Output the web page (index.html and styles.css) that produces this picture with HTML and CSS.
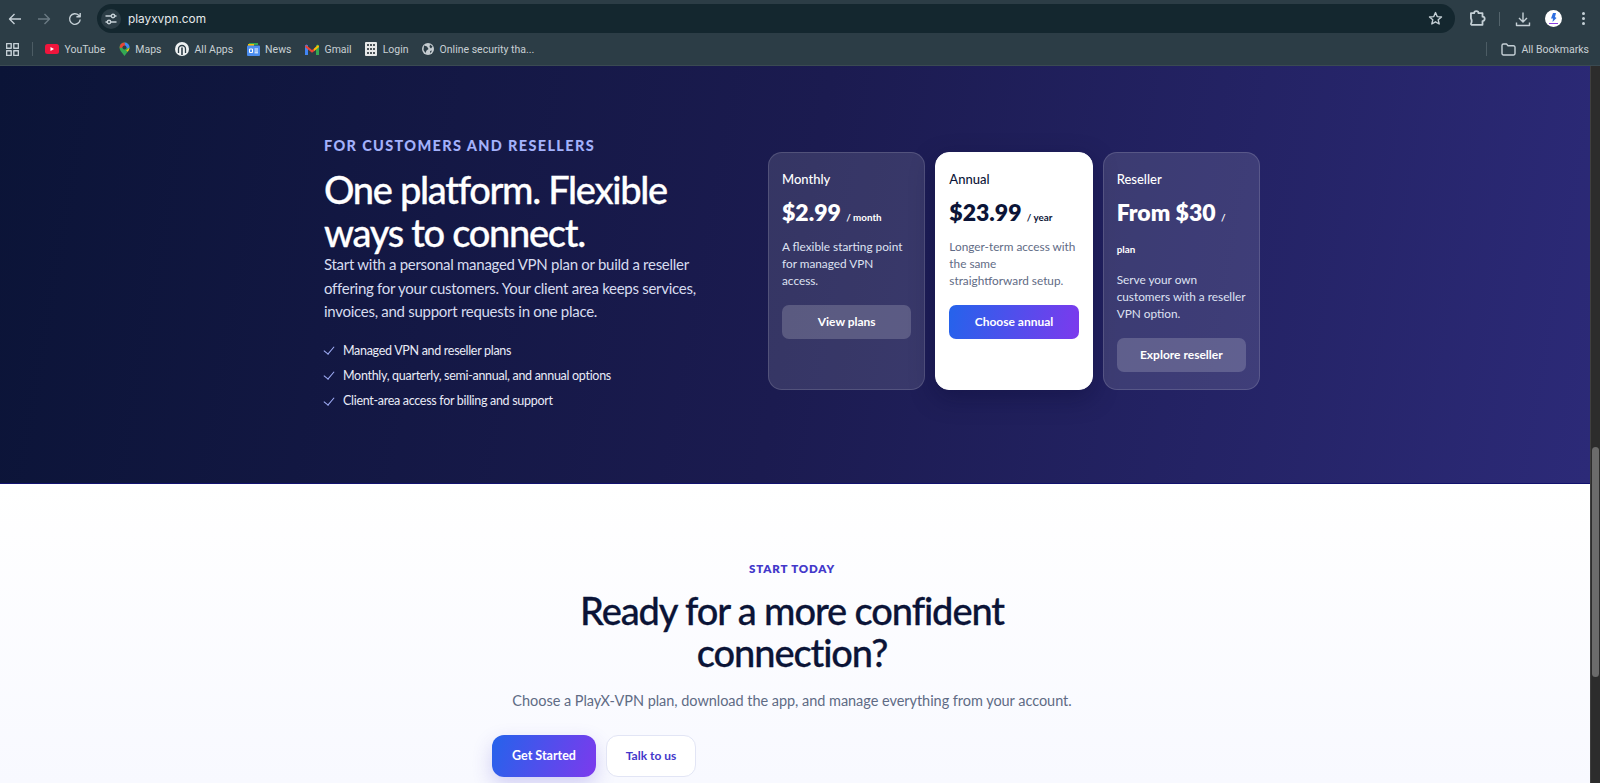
FILE: index.html
```html
<!DOCTYPE html>
<html lang="en">
<head>
<meta charset="UTF-8">
<meta name="viewport" content="width=device-width, initial-scale=1.0">
<title>PlayX-VPN</title>
<link rel="stylesheet" href="styles.css">
</head>
<body>
  <header class="browser">
    <div class="toolbar">
      <svg class="nav-icon" width="16" height="16" viewBox="0 0 16 16"><path d="M14 8H2.5M7.5 3 2.5 8l5 5"/></svg>
      <svg class="nav-icon dim" width="16" height="16" viewBox="0 0 16 16"><path d="M2 8h11.5M8.5 3l5 5-5 5"/></svg>
      <svg class="nav-icon" width="16" height="16" viewBox="0 0 16 16"><path d="M13.2 8.5a5.3 5.3 0 1 1-1.5-4.2l1.5 1.5M13.2 2v3.8H9.4"/></svg>
      <div class="omnibox">
        <span class="tune">
          <svg class="nav-icon" width="12" height="12" viewBox="0 0 12 12"><path d="M0.5 3h5.5M9.8 3h1.7M0.5 9h1.7M6 9h5.5"/><circle cx="8" cy="3" r="1.7"/><circle cx="4" cy="9" r="1.7"/></svg>
        </span>
        <span class="url">playxvpn.com</span>
        <svg class="nav-icon star" width="15" height="15" viewBox="0 0 15 15"><path d="M7.5 1.6 9.2 5.6l4.3.4-3.3 2.8 1 4.2-3.7-2.2-3.7 2.2 1-4.2L1.5 6l4.3-.4z"/></svg>
      </div>
      <svg class="nav-icon puzzle" width="18" height="18" viewBox="2 2 14 14"><path d="M3.5 4.5H6a1.7 1.7 0 0 1 3.4 0h3.1v2.7a1.7 1.7 0 0 1 0 3.4v2.9H4a.7.7 0 0 1-.5-.8c.8-1 .8-3.2 0-4.2z"/></svg>
      <span class="tool-sep"></span>
      <svg class="nav-icon download" width="16" height="16" viewBox="0 0 16 16"><path d="M8 1.5v9M4 7l4 4 4-4M1.5 11.5v3h13v-3"/></svg>
      <span class="avatar">
        <svg width="17" height="17" viewBox="0 0 17 17"><path d="M8 3h3l-1 4 1.5 1-4 4 .5-3.5H6z" fill="#2f6fe0"/><path d="M4 13.5h9" stroke="#8a3fe0" stroke-width="1"/></svg>
      </span>
      <span class="dots"><i></i><i></i><i></i></span>
    </div>
    <nav class="bookmarks">
      <svg class="nav-icon grid-icon" width="13" height="13" viewBox="0 0 13 13"><rect x=".6" y=".6" width="4.6" height="4.6"/><rect x="7.8" y=".6" width="4.6" height="4.6"/><rect x=".6" y="7.8" width="4.6" height="4.6"/><rect x="7.8" y="7.8" width="4.6" height="4.6"/></svg>
      <span class="book-sep"></span>
      <a class="mark">
        <svg width="14" height="10" viewBox="0 0 14 10"><rect width="14" height="10" rx="2.5" fill="#f0153c"/><path d="M5.5 3v4L9 5z" fill="#fff"/></svg>
        YouTube
      </a>
      <a class="mark">
        <svg width="11" height="14" viewBox="0 0 11 14"><path d="M5.5 14C3 10.5.5 8.5.5 5.5a5 5 0 0 1 10 0c0 3-2.5 5-5 8.5z" fill="#34a853"/><path d="M1.5 2.5a5 5 0 0 1 4-2l1 2.5L2.5 6l-2-.5z" fill="#ea4335"/><path d="M5.5.5a5 5 0 0 1 5 5L8 6.5 6 3z" fill="#4285f4"/><path d="M8 8l2.5-2.5c0 1.5-.8 2.8-1.8 4.2L7 8z" fill="#fbbc04"/><circle cx="5.5" cy="5.5" r="2" fill="#2c3d46"/></svg>
        Maps
      </a>
      <a class="mark">
        <svg width="14" height="14" viewBox="0 0 14 14"><circle cx="7" cy="7" r="7" fill="#eef1f2"/><path d="M3.5 11V7a3.5 3.5 0 0 1 7 0v4" fill="none" stroke="#2c3d46" stroke-width="1.3"/><path d="M7 5.5V13" stroke="#2c3d46" stroke-width="1.6"/></svg>
        All Apps
      </a>
      <a class="mark">
        <svg width="13" height="14" viewBox="0 0 13 14"><path d="M2 3V1h9v2z" fill="#34a853"/><path d="M1 4V2h6v2z" fill="#fbbc04"/><rect y="3.5" width="13" height="10.5" rx="1" fill="#4b8df0"/><path d="M2.5 7h3v3.5h-3zM7.5 7H11M7.5 9H11M7.5 10.8H11" fill="none" stroke="#fff"/></svg>
        News
      </a>
      <a class="mark">
        <svg width="14" height="11" viewBox="0 0 14 11"><path d="M0 11V1.5L1.5.5 3 1.5V11z" fill="#4285f4"/><path d="M11 11V1.5l1.5-1 1.5 1V11z" fill="#34a853"/><path d="M1 1l6 5 2-1.5v2.8L7 8.8 0 3z" fill="#ea4335"/><path d="M9 4.5 13 1l1 1.5V3L9 7.3z" fill="#fbbc04"/></svg>
        Gmail
      </a>
      <a class="mark">
        <svg width="12" height="14" viewBox="0 0 12 14"><rect width="12" height="14" rx="1" fill="#e6e8e8"/><path d="M2 2h2v2H2zM5 2h2v2H5zM8 2h2v2H8zM2 6h2v2H2zM5 6h2v2H5zM8 6h2v2H8zM5 10h2v2H5zM2 10h2v2H2zM8 10h2v2H8z" fill="#4a5257"/></svg>
        Login
      </a>
      <a class="mark">
        <svg width="12" height="12" viewBox="0 0 12 12"><circle cx="6" cy="6" r="6" fill="#c5ccd0"/><path d="M2 2.5l3 1L6.5 6l-2 1.5-1 2.5-2-3zM8 1.5l2.5 2L9 5.5 7.5 4zM8 8l2-.5-1.5 3z" fill="#2c3d46"/></svg>
        Online security tha...
      </a>
      <span class="book-sep end"></span>
      <a class="mark">
        <svg class="nav-icon" width="15" height="13" viewBox="0 0 15 13"><path d="M1 2.5A1.5 1.5 0 0 1 2.5 1h3L7 2.8h5.5A1.5 1.5 0 0 1 14 4.3v6.2a1.5 1.5 0 0 1-1.5 1.5h-10A1.5 1.5 0 0 1 1 10.5z"/></svg>
        All Bookmarks
      </a>
    </nav>
  </header>

  <div class="viewport">
    <main class="page">
      <section class="plans">
        <div class="plans-inner">
          <div class="intro">
            <p class="eyebrow">For customers and resellers</p>
            <h1>One platform. Flexible ways to connect.</h1>
            <p class="lead">Start with a personal managed VPN plan or build a reseller offering for your customers. Your client area keeps services, invoices, and support requests in one place.</p>
            <ul class="checks">
              <li>Managed VPN and reseller plans</li>
              <li>Monthly, quarterly, semi-annual, and annual options</li>
              <li>Client-area access for billing and support</li>
            </ul>
          </div>
          <div class="cards">
            <article class="card">
              <h3>Monthly</h3>
              <p class="price">$2.99 <small>/ month</small></p>
              <p class="desc">A flexible starting point for managed VPN access.</p>
              <a class="card-btn">View plans</a>
            </article>
            <article class="card featured">
              <h3>Annual</h3>
              <p class="price">$23.99 <small>/ year</small></p>
              <p class="desc">Longer-term access with the same straightforward setup.</p>
              <a class="card-btn">Choose annual</a>
            </article>
            <article class="card">
              <h3>Reseller</h3>
              <p class="price">From $30 <small>/</small> <small class="unit">plan</small></p>
              <p class="desc">Serve your own customers with a reseller VPN option.</p>
              <a class="card-btn">Explore reseller</a>
            </article>
          </div>
        </div>
      </section>

      <section class="cta">
        <div class="cta-inner">
          <p class="cta-eyebrow">Start today</p>
          <h2>Ready for a more confident connection?</h2>
          <p class="cta-text">Choose a PlayX-VPN plan, download the app, and manage everything from your account.</p>
          <div class="cta-actions">
            <a class="btn-primary">Get Started</a>
            <a class="btn-outline">Talk to us</a>
          </div>
        </div>
      </section>
    </main>
    <div class="scrollbar"><span class="thumb"></span></div>
  </div>
</body>
</html>
```

FILE: styles.css
```css
* {
  box-sizing: border-box;
}

html, body {
  height: 100%;
}

body {
  margin: 0;
  display: flex;
  flex-direction: column;
  overflow: hidden;
  font-family: Lato, "Open Sans", sans-serif;
  background-color: #fff;
}

p, h1, h2, h3, ul {
  margin: 0;
  padding: 0;
}

/* browser chrome */
.browser {
  height: 66px;
  flex: none;
  background-color: #2c3d46;
  border-bottom: 1px solid #3a4a52;
  font-family: Inter, "Liberation Sans", sans-serif;
}

.nav-icon {
  fill: none;
  stroke: #c5d0d6;
  stroke-width: 1.4;
  stroke-linejoin: round;
  flex: none;
}

.nav-icon.dim {
  stroke: #6a7a83;
}

.toolbar {
  height: 33px;
  display: flex;
  align-items: center;
  padding: 4px 0 0 7px;
}

.toolbar > .nav-icon:nth-child(2) {
  margin-left: 13px;
}

.toolbar > .nav-icon:nth-child(3) {
  margin-left: 15px;
}

.omnibox {
  margin-left: 14px;
  width: 1358px;
  height: 29px;
  background-color: #14272f;
  border-radius: 15px;
  display: flex;
  align-items: center;
  padding-left: 4px;
}

.tune {
  width: 20px;
  height: 20px;
  border-radius: 50%;
  background-color: #2c3d46;
  display: flex;
  align-items: center;
  justify-content: center;
}

.url {
  margin-left: 7px;
  font-size: 11.8px;
  color: #e6eaec;
}

.star {
  margin-left: auto;
  margin-right: 12px;
}

.puzzle {
  margin-left: 14px;
}

.tool-sep {
  width: 1px;
  height: 14px;
  background-color: #54646c;
  margin-left: 12px;
}

.download {
  margin-left: 15px;
}

.avatar {
  width: 17px;
  height: 17px;
  border-radius: 50%;
  background-color: #fff;
  margin-left: 14px;
  display: block;
  overflow: hidden;
}

.avatar svg {
  display: block;
}

.dots {
  margin-left: 20px;
  display: flex;
  flex-direction: column;
  gap: 2px;
}

.dots i {
  width: 3px;
  height: 3px;
  border-radius: 50%;
  background-color: #c5d0d6;
}

.bookmarks {
  height: 32px;
  display: flex;
  align-items: center;
  padding-left: 6px;
  font-family: Roboto, Inter, sans-serif;
  font-size: 10.5px;
  color: #c8d0d4;
}

.grid-icon {
  margin-right: 13px;
}

.book-sep {
  width: 1px;
  height: 14px;
  background-color: #4c5c64;
  margin-right: 12px;
}

.book-sep.end {
  margin-left: auto;
  margin-right: 14px;
}

.mark {
  display: flex;
  align-items: center;
  gap: 5.5px;
  margin-right: 13.5px;
  white-space: nowrap;
}

.mark:last-child {
  margin-right: 11px;
}

/* page */
.viewport {
  flex: 1;
  min-height: 0;
  display: flex;
}

.page {
  flex: 1;
  min-width: 0;
  overflow: hidden;
}

.scrollbar {
  width: 10px;
  flex: none;
  background-color: #2c2c2c;
  border-left: 1px solid #3f3f3f;
  padding: 381px 1px 0;
}

.thumb {
  display: block;
  height: 230px;
  background-color: #6b6b6b;
  border-radius: 4px;
}

/* plans */
.plans {
  height: 418px;
  padding: 71px 0 0 324px;
  background: linear-gradient(100deg, #0b1437 0%, #1b1b50 50%, #2c2a78 100%);
  border-bottom: 1px solid #12126e;
  color: #fff;
}

.plans-inner {
  width: 936px;
  display: flex;
  justify-content: space-between;
}

.intro {
  width: 384px;
}

.eyebrow {
  font-size: 14.5px;
  line-height: 18px;
  font-weight: 900;
  letter-spacing: 1.35px;
  text-transform: uppercase;
  color: #a3b1fb;
}

h1 {
  margin-top: 13px;
  font-size: 38px;
  line-height: 42.5px;
  font-weight: 500;
  letter-spacing: -1.3px;
  -webkit-text-stroke: 0.3px #fff;
}

.lead {
  font-size: 15px;
  line-height: 23.5px;
  letter-spacing: -0.28px;
  color: #d7dcef;
}

.checks {
  list-style: none;
  margin-top: 14px;
}

.checks li {
  font-size: 12.5px;
  line-height: 25.4px;
  letter-spacing: -0.3px;
  color: #e9ebf7;
  display: flex;
  align-items: center;
  gap: 8px;
}

.checks li::before {
  content: "";
  width: 5px;
  height: 9px;
  margin: 0 3px 3px 2px;
  border-right: 1px solid #a3b1fb;
  border-bottom: 1px solid #a3b1fb;
  transform: rotate(40deg);
}

.cards {
  width: 492px;
  display: grid;
  grid-template-columns: repeat(3, 1fr);
  gap: 10px;
  align-self: flex-start;
  margin-top: 15px;
  height: 238px;
}

.card {
  padding: 14px 13px 0;
  border-radius: 14px;
  border: 1px solid rgba(255, 255, 255, 0.14);
  background-color: rgba(255, 255, 255, 0.12);
  color: #fff;
}

.card h3 {
  font-size: 13px;
  line-height: 24px;
  font-weight: 500;
}

.price {
  margin-top: 5px;
  font-size: 23px;
  line-height: 32px;
  font-weight: 800;
}

.price small {
  font-size: 9.8px;
  line-height: 1;
  font-weight: 700;
}

/* the reseller price runs out of room, the unit sits on its own line */
.price .unit {
  display: block;
  line-height: 24px;
  margin-top: 9px;
}

.desc {
  margin-top: 10px;
  font-size: 11.8px;
  line-height: 17px;
  color: #dfe2f2;
}

.card-btn {
  display: block;
  margin-top: 16px;
  height: 34px;
  line-height: 34px;
  text-align: center;
  font-size: 12px;
  font-weight: 700;
  border-radius: 7px;
  color: #fff;
  background-color: rgba(255, 255, 255, 0.18);
}

.featured {
  background-color: #fff;
  border-color: #fff;
  color: #0b1437;
  box-shadow: 0 8px 24px rgba(8, 10, 50, 0.35);
}

.featured .desc {
  color: #5f6b85;
}

.featured .card-btn {
  background: linear-gradient(100deg, #2563eb, #7c3aed);
}

/* call to action */
.cta {
  height: 299px;
  padding-top: 76px;
  background: linear-gradient(180deg, #fff 0%, #f8f9ff 100%);
}

.cta-inner {
  width: 600px;
  margin-left: 492px;
  text-align: center;
}

.cta-eyebrow {
  font-size: 11.5px;
  line-height: 18px;
  font-weight: 800;
  letter-spacing: 0.85px;
  text-transform: uppercase;
  color: #4338ca;
}

h2 {
  width: 470px;
  margin: 11px auto 0;
  font-size: 38px;
  line-height: 42px;
  font-weight: 500;
  letter-spacing: -1.1px;
  -webkit-text-stroke: 0.3px #0b1437;
  color: #0b1437;
}

.cta-text {
  margin-top: 16px;
  font-size: 14.5px;
  line-height: 24px;
  letter-spacing: -0.04px;
  color: #5f6b85;
  white-space: nowrap;
}

.cta-actions {
  display: flex;
  gap: 10px;
  margin-top: 22px;
}

.btn-primary,
.btn-outline {
  height: 42px;
  line-height: 40px;
  border-radius: 12px;
  font-size: 12px;
  font-weight: 700;
  text-align: center;
}

.btn-primary {
  width: 104px;
  line-height: 42px;
  font-size: 12.5px;
  color: #fff;
  background: linear-gradient(110deg, #2563eb, #7c3aed);
  box-shadow: 0 8px 20px rgba(67, 56, 202, 0.22);
}

.btn-outline {
  width: 90px;
  color: #4338ca;
  background-color: #fff;
  border: 1px solid #e2e5f5;
}
```
